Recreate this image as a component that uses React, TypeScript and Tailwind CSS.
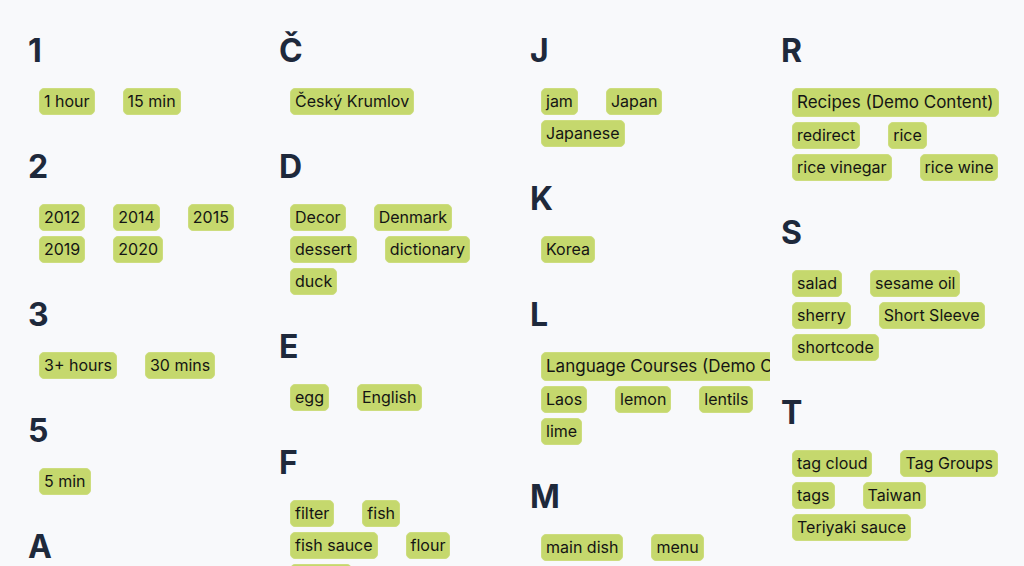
import React from "react";

type Tag = { label: string; big?: boolean };
type Group = { letter: string; tags: Tag[] };

const t = (label: string, big = false): Tag => ({ label, big });

const columns: Group[][] = [
  [
    { letter: "1", tags: [t("1 hour"), t("15 min")] },
    { letter: "2", tags: [t("2012"), t("2014"), t("2015"), t("2019"), t("2020")] },
    { letter: "3", tags: [t("3+ hours"), t("30 mins")] },
    { letter: "5", tags: [t("5 min")] },
    { letter: "A", tags: [t("appetizer"), t("Asian")] },
  ],
  [
    { letter: "Č", tags: [t("Český Krumlov")] },
    { letter: "D", tags: [t("Decor"), t("Denmark"), t("dessert"), t("dictionary"), t("duck")] },
    { letter: "E", tags: [t("egg"), t("English")] },
    { letter: "F", tags: [t("filter"), t("fish"), t("fish sauce"), t("flour"), t("French")] },
  ],
  [
    { letter: "J", tags: [t("jam"), t("Japan"), t("Japanese")] },
    { letter: "K", tags: [t("Korea")] },
    {
      letter: "L",
      tags: [t("Language Courses (Demo Content)", true), t("Laos"), t("lemon"), t("lentils"), t("lime")],
    },
    { letter: "M", tags: [t("main dish"), t("menu")] },
  ],
  [
    {
      letter: "R",
      tags: [t("Recipes (Demo Content)", true), t("redirect"), t("rice"), t("rice vinegar"), t("rice wine")],
    },
    { letter: "S", tags: [t("salad"), t("sesame oil"), t("sherry"), t("Short Sleeve"), t("shortcode")] },
    { letter: "T", tags: [t("tag cloud"), t("Tag Groups"), t("tags"), t("Taiwan"), t("Teriyaki sauce")] },
  ],
];

function TagPill({ tag }: { tag: Tag }) {
  return (
    <span
      className={
        tag.big
          ? "shrink-0 whitespace-nowrap rounded-[5px] border border-[#cddd7e] bg-[#c5d86d] px-[4px] py-[3px] text-[17px] leading-[21px] text-[#141414]"
          : "shrink-0 whitespace-nowrap rounded-[5px] border border-[#cddd7e] bg-[#c5d86d] px-[4px] py-[3px] text-[16px] leading-[19px] text-[#141414]"
      }
    >
      {tag.label}
    </span>
  );
}

export default function App() {
  return (
    <div
      className="min-h-[566px] w-full overflow-hidden bg-[#f8f9fb] pl-[28px] pt-[31px]"
      style={{ fontFamily: 'Inter, "Noto Sans", sans-serif' }}
    >
      <div className="flex gap-[11px]">
        {columns.map((col, ci) => (
          <div key={ci} className="w-[240px] shrink-0 overflow-hidden">
            {col.map((g) => (
              <section key={g.letter} className="mb-[32px]">
                <h2 className="text-[32px] font-bold leading-[40px] text-[#1e293b]">{g.letter}</h2>
                <div className="ml-[11px] mt-[17px] flex w-[218px] flex-wrap gap-x-[28px] gap-y-[5px]">
                  {g.tags.map((tag) => (
                    <TagPill key={tag.label} tag={tag} />
                  ))}
                </div>
              </section>
            ))}
          </div>
        ))}
      </div>
    </div>
  );
}
